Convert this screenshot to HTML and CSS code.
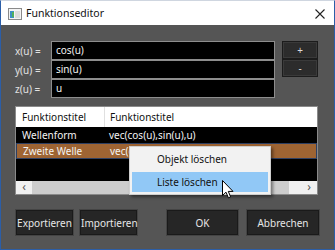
FILE: index.html
```html
<!DOCTYPE html>
<html lang="de">
<head>
    <meta charset="UTF-8">
    <title>Funktionseditor</title>
    <link rel="stylesheet" href="styles.css">
</head>
<body>
    <div class="window">
        <div class="titlebar">
            <svg class="app-icon" width="14" height="12" viewBox="0 0 14 12">
                <rect x="0.5" y="0.5" width="13" height="11" fill="#f4f4f4" stroke="#8a8a8a"/>
                <rect x="2" y="3" width="4" height="7" fill="#3d8fc4"/>
                <rect x="4" y="4" width="2" height="5" fill="#52b05a"/>
                <rect x="7" y="3" width="5" height="7" fill="#dcdcdc"/>
            </svg>
            <span class="title">Funktionseditor</span>
            <svg class="close" width="10" height="10" viewBox="0 0 10 10">
                <path d="M0.5 0.5 L9.5 9.5 M9.5 0.5 L0.5 9.5" stroke="#222" stroke-width="1.1"/>
            </svg>
        </div>

        <div class="content">
            <div class="formula">
                <div class="fields">
                    <div class="field"><label>x(u) =</label><div class="input">cos(u)</div></div>
                    <div class="field"><label>y(u) =</label><div class="input">sin(u)</div></div>
                    <div class="field"><label>z(u) =</label><div class="input">u</div></div>
                </div>
                <div class="side-buttons">
                    <button class="small">+</button>
                    <button class="small">-</button>
                </div>
            </div>

            <div class="list">
                <div class="row header">
                    <div class="col1">Funktionstitel</div>
                    <div class="col2">Funktionstitel</div>
                </div>
                <div class="row">
                    <div class="col1">Wellenform</div>
                    <div class="col2">vec(cos(u),sin(u),u)</div>
                </div>
                <div class="row selected">
                    <div class="col1">Zweite Welle</div>
                    <div class="col2">vec(cos(u),sin(u),2*u)</div>
                </div>
                <div class="list-empty"></div>
                <div class="hscroll">
                    <span class="arrow">&lsaquo;</span>
                    <span class="thumb"></span>
                    <span class="track"></span>
                    <span class="arrow">&rsaquo;</span>
                </div>

                <div class="menu">
                    <div class="menu-item">Objekt löschen</div>
                    <div class="menu-item active">Liste löschen</div>
                </div>
                <svg class="cursor" width="12" height="19" viewBox="0 0 12 19">
                    <path d="M0.5 0.5 L0.5 15.5 L4 12.2 L6.4 17.8 L8.6 16.8 L6.3 11.4 L11 11.4 Z" fill="#fff" stroke="#000" stroke-width="1"/>
                </svg>
            </div>

            <div class="bottom">
                <button class="btn export">Exportieren</button>
                <button class="btn import">Importieren</button>
                <span class="spacer"></span>
                <button class="btn ok">OK</button>
                <button class="btn cancel">Abbrechen</button>
            </div>
        </div>
    </div>
</body>
</html>
```

FILE: styles.css
```css
body {
    margin: 0;
    font-family: "Noto Sans", sans-serif;
    font-size: 10px;
}

.window {
    width: 335px;
    height: 250px;
    box-sizing: border-box;
    border: 1px solid #2b5ea8;
    border-top-color: #cfd6e0;
    display: flex;
    flex-direction: column;
    background-color: #555555;
}

.titlebar {
    height: 24px;
    background-color: #fff;
    display: flex;
    align-items: center;
    padding: 0 9px 0 7px;
}

.app-icon {
    margin-right: 4px;
    margin-top: 1px;
}

.title {
    flex: 1;
    color: #111;
    font-size: 10.5px;
}

.close {
    margin-top: 1px;
}

.content {
    flex: 1;
    position: relative;
    padding: 16px 15px 0 14px;
}

.formula {
    display: flex;
}

.field {
    display: flex;
    align-items: center;
}

.field label {
    width: 36px;
    color: #e2e2e2;
}

.input {
    width: 218px;
    height: 17px;
    line-height: 17px;
    border: 1px solid #8d8d8d;
    background-color: #000;
    color: #f2f2f2;
    padding-left: 4px;
}

.side-buttons {
    display: flex;
    flex-direction: column;
    margin-left: 7px;
}

.small {
    width: 36px;
    height: 18px;
    padding: 0;
    background-color: #2c2c2c;
    border: 1px solid #1c1c1c;
    box-shadow: inset 0 0 0 1px #3a3a3a;
    color: #dcdcdc;
    font-family: inherit;
    font-size: 10px;
    line-height: 14px;
}

.list {
    margin-top: 8px;
    width: 303px;
    height: 89px;
    box-sizing: border-box;
    border: 1px solid #8a8a8a;
    background-color: #000;
    display: flex;
    flex-direction: column;
    position: relative;
}

.row {
    display: flex;
    height: 16px;
    line-height: 16px;
    color: #f4f4f4;
    box-sizing: border-box;
}

.row.header {
    height: 20px;
    line-height: 20px;
    background-color: #fff;
    color: #111;
}

.col1 {
    width: 82px;
    padding-left: 6px;
    white-space: nowrap;
    overflow: hidden;
}

.header .col1 {
    border-right: 1px solid #e0e0e0;
}

.col2 {
    padding-left: 5px;
    white-space: nowrap;
}

.row.selected {
    background-color: #9e6433;
    border: 1px solid #2d3f62;
    line-height: 14px;
}

.list-empty {
    flex: 1;
}

.hscroll {
    height: 13px;
    display: flex;
    background-color: #f0f0f0;
    color: #555;
    font-size: 12px;
    line-height: 12px;
}

.hscroll .arrow {
    width: 16px;
    text-align: center;
}

.thumb {
    width: 257px;
    background-color: #cdcdcd;
}

.track {
    flex: 1;
}

.menu {
    position: absolute;
    left: 113px;
    top: 39px;
    width: 136px;
    padding: 2px;
    background-color: #f2f2f2;
    border: 1px solid #cfcfcf;
    box-shadow: 2px 2px 3px rgba(0, 0, 0, 0.45);
    color: #111;
}

.menu-item {
    height: 20px;
    line-height: 20px;
    padding-left: 25px;
}

.menu-item.active {
    margin-top: 3px;
    background-color: #91c8f6;
}

.cursor {
    position: absolute;
    left: 206px;
    top: 73px;
}

.bottom {
    display: flex;
    margin-top: 15px;
}

.btn {
    height: 25px;
    padding: 0;
    background-color: #262626;
    border: 1px solid #1a1a1a;
    box-shadow: 0 0 0 1px #444;
    color: #e6e6e6;
    font-family: inherit;
    font-size: 10px;
}

.export {
    width: 57px;
    margin-left: 1px;
}

.import {
    width: 57px;
    margin-left: 7px;
}

.spacer {
    flex: 1;
}

.ok {
    width: 71px;
}

.cancel {
    width: 72px;
    margin-left: 9px;
}
```
